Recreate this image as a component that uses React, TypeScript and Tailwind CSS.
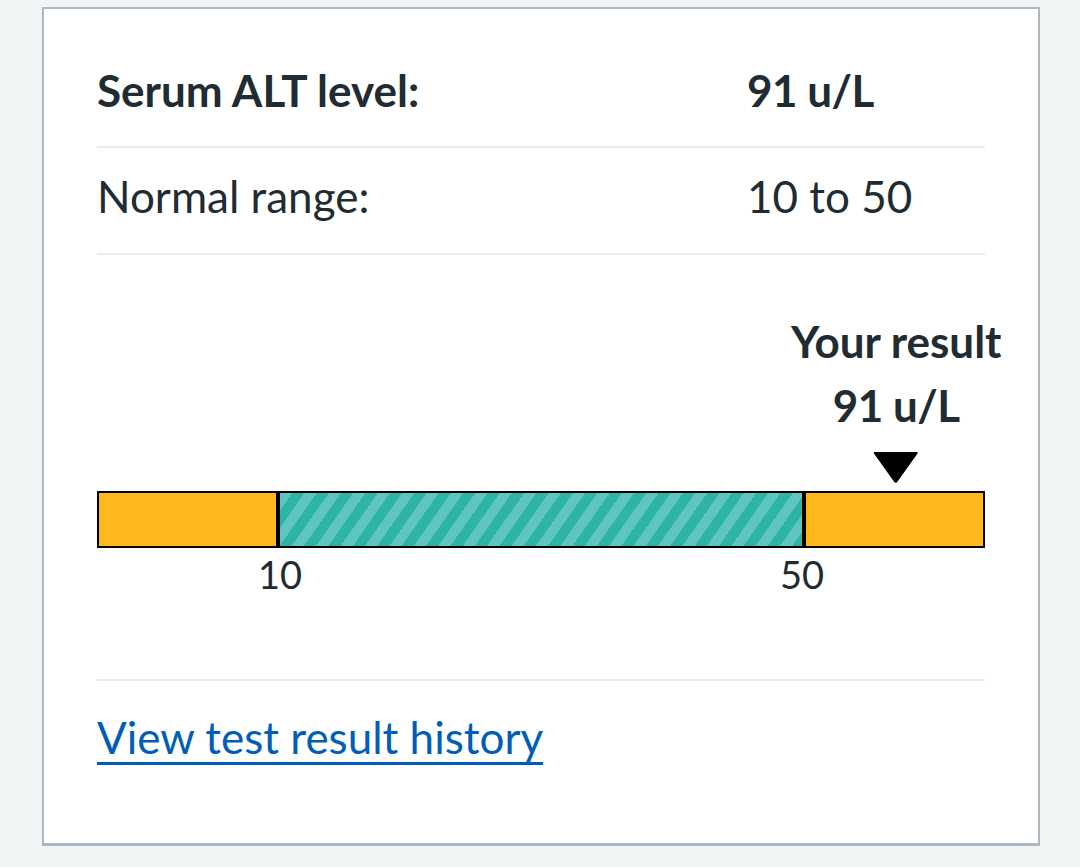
import React from "react";

export default function App() {
  return (
    <div
      className="min-h-screen w-full bg-[#f0f4f5] pt-[7px] pl-[42px] pr-[40px] pb-[20px]"
      style={{ fontFamily: "Lato, 'Noto Sans', Arial, sans-serif" }}
    >
      <div className="bg-white border-2 border-b-[3px] border-[#aeb7bd] px-[53px] h-[839px] text-[#212b32]">
        {/* Row 1 */}
        <div className="flex pt-[55px] pb-[30px] border-b-2 border-[#e8edee] text-[44px] leading-[52px] font-bold">
          <div className="w-[650px]">Serum ALT level:</div>
          <div className="tracking-[-0.5px]">91 u/L</div>
        </div>
        {/* Row 2 */}
        <div className="flex pt-[22px] pb-[31px] border-b-2 border-[#e8edee] text-[44px] leading-[52px]">
          <div className="w-[650px]">Normal range:</div>
          <div>10 to 50</div>
        </div>
        {/* Chart */}
        <div className="relative h-[426px] border-b-2 border-[#e8edee]">
          <div className="absolute left-[90%] top-[60px] -translate-x-1/2 flex flex-col items-center whitespace-nowrap">
            <div className="text-[44px] leading-[52px] font-bold">Your result</div>
            <div className="text-[44px] leading-[52px] font-bold mt-[12px] tracking-[-0.5px]">91 u/L</div>
            <svg width="46" height="32" viewBox="0 0 46 32" className="mt-[20px]">
              <path d="M2 2 L44 2 L24 30 Q23 31.5 22 30 Z" fill="#000" stroke="#000" strokeWidth="2" strokeLinejoin="round" />
            </svg>
          </div>
          <div className="absolute left-0 right-0 top-[236px]">
            <div className="flex h-[57px] border-2 border-black">
              <div className="w-[20%] bg-[#ffb81c]" />
              <div className="w-[60%] border-x-4 border-black bg-[repeating-linear-gradient(125deg,#5ec6bc_0px,#5ec6bc_10px,#2db4a7_10px,#2db4a7_20px)]" />
              <div className="w-[20%] bg-[#ffb81c]" />
            </div>
            <div className="relative h-[60px] text-[38px] leading-[52px]">
              <div className="absolute left-[20.6%] top-0 -translate-x-1/2">10</div>
              <div className="absolute left-[79.4%] top-0 -translate-x-1/2">50</div>
            </div>
          </div>
        </div>
        {/* Link */}
        <div className="pt-[30px]">
          <a
            href="#"
            className="text-[44px] leading-[52px] text-[#005eb8] underline decoration-[3px] underline-offset-[8px]"
          >
            View test result history
          </a>
        </div>
      </div>
    </div>
  );
}
